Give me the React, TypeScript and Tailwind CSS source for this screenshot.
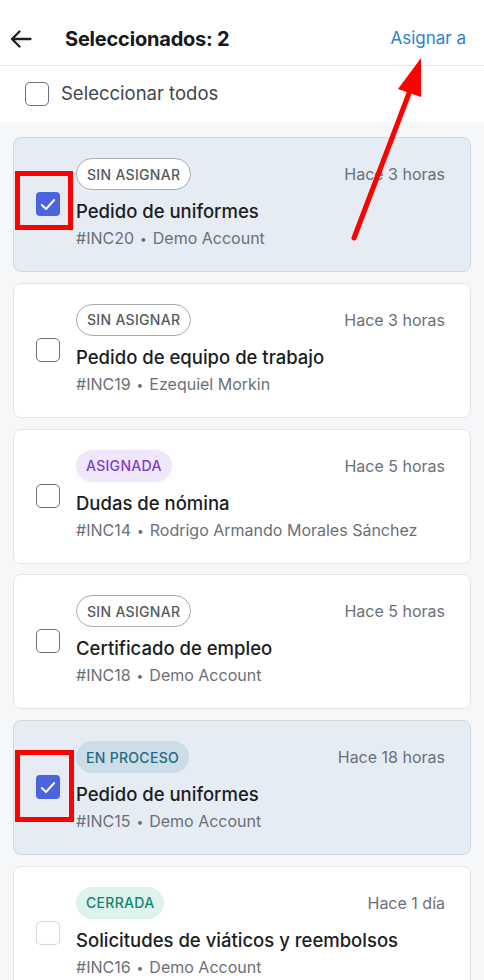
import React from "react";

type Status = "sin" | "asignada" | "proceso" | "cerrada";

const tickets: {
  status: Status;
  time: string;
  title: string;
  code: string;
  who: string;
  checked?: boolean;
  disabled?: boolean;
  mark?: "a" | "b";
}[] = [
  { status: "sin", time: "Hace 3 horas", title: "Pedido de uniformes", code: "#INC20", who: "Demo Account", checked: true, mark: "a" },
  { status: "sin", time: "Hace 3 horas", title: "Pedido de equipo de trabajo", code: "#INC19", who: "Ezequiel Morkin" },
  { status: "asignada", time: "Hace 5 horas", title: "Dudas de nómina", code: "#INC14", who: "Rodrigo Armando Morales Sánchez" },
  { status: "sin", time: "Hace 5 horas", title: "Certificado de empleo", code: "#INC18", who: "Demo Account" },
  { status: "proceso", time: "Hace 18 horas", title: "Pedido de uniformes", code: "#INC15", who: "Demo Account", checked: true, mark: "b" },
  { status: "cerrada", time: "Hace 1 día", title: "Solicitudes de viáticos y reembolsos", code: "#INC16", who: "Demo Account", disabled: true },
];

function Badge({ status }: { status: Status }) {
  if (status === "sin")
    return (
      <span className="h-[32px] px-[10px] inline-flex items-center rounded-full border border-[#a9adb3] bg-white text-[14px] font-medium tracking-[0.3px] text-[#555a61]">
        SIN ASIGNAR
      </span>
    );
  if (status === "asignada")
    return (
      <span className="h-[32px] px-[10px] inline-flex items-center rounded-full bg-[#f1e7fc] text-[14px] font-medium tracking-[0.3px] text-[#7a3fd0]">
        ASIGNADA
      </span>
    );
  if (status === "proceso")
    return (
      <span className="h-[32px] px-[10px] inline-flex items-center rounded-full bg-[#cddde8] text-[14px] font-medium tracking-[0.3px] text-[#1f6a84]">
        EN PROCESO
      </span>
    );
  return (
    <span className="h-[32px] px-[10px] inline-flex items-center rounded-full bg-[#ddf4ee] text-[14px] font-medium tracking-[0.3px] text-[#16846a]">
      CERRADA
    </span>
  );
}

function Check({ checked, disabled }: { checked?: boolean; disabled?: boolean }) {
  if (checked)
    return (
      <div className="w-[24px] h-[24px] rounded-[4px] bg-[#4b63df] flex items-center justify-center">
        <svg width="16" height="13" viewBox="0 0 16 13" fill="none">
          <path d="M1.8 7 6 11 14.2 2" stroke="white" strokeWidth="1.9" strokeLinecap="round" strokeLinejoin="round" />
        </svg>
      </div>
    );
  return (
    <div
      className={
        disabled
          ? "w-[24px] h-[24px] rounded-[5px] border-[1.5px] border-[#d4d7dc] bg-white"
          : "w-[24px] h-[24px] rounded-[5px] border-[1.5px] border-[#6d7178] bg-white"
      }
    />
  );
}

export default function App() {
  return (
    <div
      className="relative w-[484px] h-[980px] overflow-hidden bg-[#f5f7f9]"
      style={{ fontFamily: "Inter, 'Noto Sans', sans-serif" }}
    >
      {/* header */}
      <div className="h-[66px] pt-[12px] bg-white border-b border-[#e6e8eb] flex items-center pl-[10px] pr-[18px]">
        <svg width="22" height="18" viewBox="0 0 22 18" fill="none">
          <path d="M20.5 9H2M9.5 1.5 2 9l7.5 7.5" stroke="#1d2024" strokeWidth="2.3" strokeLinecap="round" strokeLinejoin="round" />
        </svg>
        <h1 className="ml-[33px] text-[20px] font-bold text-[#16181b] tracking-[-0.2px]">Seleccionados: 2</h1>
        <button className="ml-auto text-[17px] text-[#2e7fd2]">Asignar a</button>
      </div>

      {/* select all */}
      <div className="h-[56px] pb-[1px] bg-white flex items-center pl-[25px] gap-[12px]">
        <div className="w-[24px] h-[24px] rounded-[5px] border-[1.5px] border-[#6d7178]" />
        <span className="text-[18.5px] text-[#41454b]">Seleccionar todos</span>
      </div>

      {/* list */}
      <div className="px-[13px] pt-[15px] flex flex-col gap-[10.8px]">
        {tickets.map((t, i) => (
          <div
            key={i}
            className={
              t.checked
                ? "flex items-center rounded-[8px] border border-[#cfd9e3] bg-[#e5ecf4] pl-[22px] pr-[21px] pt-[20px] pb-[21px]"
                : "flex items-center rounded-[8px] border border-[#e3e6ea] bg-white pl-[22px] pr-[21px] pt-[20px] pb-[21px]"
            }
          >
            <div className="relative shrink-0">
              <Check checked={t.checked} disabled={t.disabled} />
              {t.mark === "a" && (
                <div className="absolute left-[-21px] top-[-21px] w-[58px] h-[59px] border-[5px] border-[#ff0000]" />
              )}
              {t.mark === "b" && (
                <div className="absolute left-[-21px] top-[-25px] w-[59px] h-[72px] border-[5px] border-[#ff0000]" />
              )}
            </div>
            <div className="ml-[16px] flex-1 min-w-0">
              <div className="flex items-center justify-between pr-[4px]">
                <Badge status={t.status} />
                <span className="text-[16px] text-[#6b7078]">{t.time}</span>
              </div>
              <p className="mt-[8px] leading-[26px] text-[18.5px] font-medium text-[#1b1e22] truncate">{t.title}</p>
              <p className="mt-[3px] leading-[22px] text-[16px] text-[#6b7078] truncate">
                {t.code}
                <span className="mx-[6px] text-[12px] align-[1px]">•</span>
                {t.who}
              </p>
            </div>
          </div>
        ))}
      </div>

      {/* annotation arrow */}
      <svg className="absolute left-0 top-0 pointer-events-none" width="484" height="980" viewBox="0 0 484 980">
        <line x1="354" y1="238" x2="411" y2="88" stroke="#ff0000" strokeWidth="5" strokeLinecap="round" />
        <polygon points="421,58 398,89 421,97" fill="#ff0000" />
      </svg>
    </div>
  );
}
